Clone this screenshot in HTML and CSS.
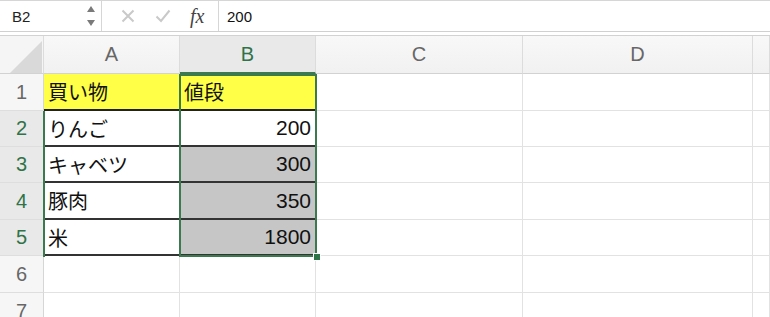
FILE: index.html
```html
<!DOCTYPE html>
<html lang="ja">

<head>
    <meta charset="UTF-8">
    <title>Sheet</title>
    <link rel="stylesheet" href="styles.css">
</head>

<body>
    <div class="formula-bar">
        <div class="name-box">
            <span class="name">B2</span>
            <svg class="spin" width="10" height="22" viewBox="0 0 10 22">
                <path d="M1 7 L5 1 L9 7 Z" fill="#7a7a7a" />
                <path d="M1 15 L5 21 L9 15 Z" fill="#7a7a7a" />
            </svg>
        </div>
        <div class="fb-tools">
            <svg width="14" height="14" viewBox="0 0 14 14">
                <path d="M1.5 1.5 L12.5 12.5 M12.5 1.5 L1.5 12.5" stroke="#c9c9c9" stroke-width="2" />
            </svg>
            <svg width="16" height="14" viewBox="0 0 16 14">
                <path d="M1.5 7.5 L6 12 L14.5 1.5" stroke="#c9c9c9" stroke-width="2" fill="none" />
            </svg>
            <span class="fx">fx</span>
        </div>
        <div class="fb-input">200</div>
    </div>

    <div class="sheet">
        <!-- header row -->
        <div class="corner">
            <svg width="44" height="38" viewBox="0 0 44 38">
                <path d="M10 37 L42 5 L42 37 Z" fill="#d9d9d9" />
            </svg>
        </div>
        <div class="col-head">A</div>
        <div class="col-head active">B</div>
        <div class="col-head">C</div>
        <div class="col-head">D</div>
        <div class="col-head"></div>

        <!-- row 1 -->
        <div class="row-head">1</div>
        <div class="cell yellow top">買い物</div>
        <div class="cell yellow top">値段</div>
        <div class="cell"></div>
        <div class="cell"></div>
        <div class="cell"></div>

        <!-- row 2 -->
        <div class="row-head sel">2</div>
        <div class="cell data">りんご</div>
        <div class="cell data num">200</div>
        <div class="cell"></div>
        <div class="cell"></div>
        <div class="cell"></div>

        <!-- row 3 -->
        <div class="row-head sel">3</div>
        <div class="cell data">キャベツ</div>
        <div class="cell data num gray">300</div>
        <div class="cell"></div>
        <div class="cell"></div>
        <div class="cell"></div>

        <!-- row 4 -->
        <div class="row-head sel">4</div>
        <div class="cell data">豚肉</div>
        <div class="cell data num gray">350</div>
        <div class="cell"></div>
        <div class="cell"></div>
        <div class="cell"></div>

        <!-- row 5 -->
        <div class="row-head sel">5</div>
        <div class="cell data">米</div>
        <div class="cell data num gray">1800</div>
        <div class="cell"></div>
        <div class="cell"></div>
        <div class="cell"></div>

        <!-- row 6 -->
        <div class="row-head">6</div>
        <div class="cell"></div>
        <div class="cell"></div>
        <div class="cell"></div>
        <div class="cell"></div>
        <div class="cell"></div>

        <!-- row 7 -->
        <div class="row-head">7</div>
        <div class="cell"></div>
        <div class="cell"></div>
        <div class="cell"></div>
        <div class="cell"></div>
        <div class="cell"></div>

        <!-- selection outlines -->
        <div class="sel-b"></div>
        <div class="sel-a"></div>
        <div class="fill-handle"></div>
    </div>
</body>

</html>
```

FILE: styles.css
```css
body {
    margin: 0;
    background: #fff;
    font-family: "Liberation Sans", "Noto Sans CJK JP", sans-serif;
    color: #222;
    overflow: hidden;
}

.formula-bar {
    display: flex;
    height: 32px;
    border-top: 1px solid #d6d6d6;
    border-bottom: 1px solid #d0d0d0;
    background: #fff;
    box-sizing: border-box;
}

.name-box {
    width: 102px;
    display: flex;
    align-items: center;
    justify-content: space-between;
    padding: 0 5px 0 12px;
    border-right: 1px solid #d6d6d6;
    box-sizing: border-box;
}

.name {
    font-size: 15px;
    color: #222;
}

.fb-tools {
    width: 117px;
    display: flex;
    align-items: center;
    gap: 20px;
    padding-left: 19px;
    border-right: 1px solid #d6d6d6;
    box-sizing: border-box;
}

.fx {
    font-family: "Liberation Serif", serif;
    font-style: italic;
    font-size: 20px;
    color: #444;
    margin-left: -1px;
}

.fb-input {
    flex: 1;
    display: flex;
    align-items: center;
    padding-left: 8px;
    font-size: 15px;
    color: #111;
}

.sheet {
    position: relative;
    margin-top: 3px;
    border-top: 1px solid #d2d2d2;
    background: #fff;
    display: grid;
    grid-template-columns: 44px 136px 136px 207px 230px 1fr;
    grid-template-rows: 38px 37px 36px 36px 37px 36px 37px 37px;
}

.corner {
    background: #f5f5f5;
    border-right: 1px solid #dcdcdc;
    border-bottom: 1px solid #d2d2d2;
    box-sizing: border-box;
}

.corner svg {
    display: block;
}

.col-head {
    display: flex;
    align-items: center;
    justify-content: center;
    background: linear-gradient(#f8f8f8, #f1f1f1);
    border-right: 1px solid #dcdcdc;
    border-bottom: 1px solid #d2d2d2;
    box-sizing: border-box;
    font-size: 20px;
    color: #676767;
}

.col-head.active {
    background: #e9e9e9;
    color: #2f7348;
    border-bottom: 2px solid #3b7a4f;
}

.row-head {
    display: flex;
    align-items: center;
    justify-content: center;
    background: #f6f6f6;
    border-right: 1px solid #d6d6d6;
    border-bottom: 1px solid #dedede;
    box-sizing: border-box;
    font-size: 20px;
    color: #676767;
}

.row-head.sel {
    background: #e9e9e9;
    color: #2f7348;
}

.cell {
    display: flex;
    align-items: center;
    padding: 0 4px;
    border-right: 1px solid #e2e2e2;
    border-bottom: 1px solid #e2e2e2;
    box-sizing: border-box;
    font-size: 20px;
    color: #111;
    white-space: nowrap;
}

.cell.yellow {
    background: #ffff47;
    border-right-color: #222;
    border-bottom: 2px solid #222;
}

.cell.data {
    border-right-color: #222;
    border-bottom: 2px solid #333;
}

.cell.num {
    justify-content: flex-end;
    font-size: 21px;
}

.cell.gray {
    background: #c6c6c6;
}

.sel-b {
    position: absolute;
    left: 179px;
    top: 38px;
    width: 138px;
    height: 183px;
    border: 2px solid #3b7a4f;
    box-sizing: border-box;
}

.sel-a {
    position: absolute;
    left: 43px;
    top: 75px;
    width: 2px;
    height: 146px;
    background: #3b7a4f;
}

.fill-handle {
    position: absolute;
    left: 313px;
    top: 217px;
    width: 6px;
    height: 6px;
    background: #2f7348;
    border: 1px solid #fff;
}
```
